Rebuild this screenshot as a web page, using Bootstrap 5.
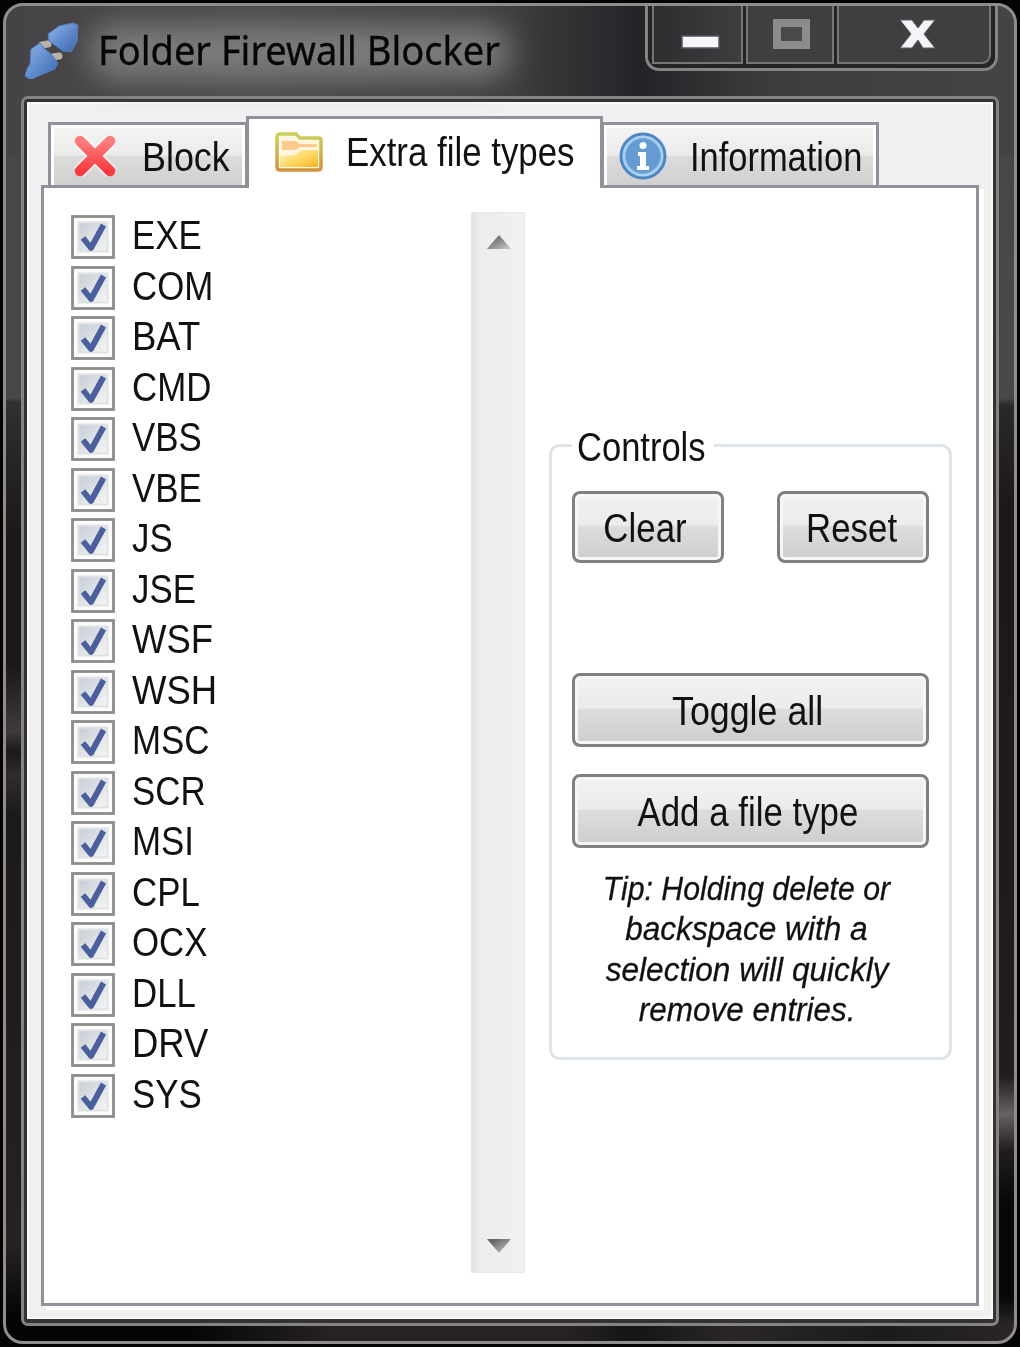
<!DOCTYPE html>
<html lang="en">
<head>
<meta charset="utf-8">
<title>Folder Firewall Blocker</title>
<link href="https://cdn.jsdelivr.net/npm/bootstrap@5.3.0/dist/css/bootstrap.min.css" rel="stylesheet">
<style>
body{margin:0;background:#050303;width:1020px;height:1347px;overflow:hidden;font-family:"Liberation Sans",Arial,sans-serif;font-size:41px;line-height:50px;color:#111}
.win{width:1014px;height:1341px;margin:3px;border:3px solid #8e8c8e;border-radius:20px;overflow:hidden;padding:0 15px 14px;background:
 linear-gradient(90deg,#454345 0,#4b494b 25%,#3f3d3f 50%,#222427 63%,#3f3c3e 76%,#464345 100%) 0 0/100% 150px no-repeat,
 linear-gradient(90deg,#040506 0,#040506 18%,#262122 32%,#262122 56%,#151516 62%,#2a2627 72%,#1b1b1d 87%,#2a2527 100%) 0 100%/100% 18px no-repeat,
 linear-gradient(180deg,#474547 0,#494749 392px,#312f31 396px,#1b171a 530px,#1b171a 660px,#403b3a 725px,#1c1919 745px,#302c2b 770px,#1c1919 810px,#262122 1240px,#040506 1310px) 0 0/50% 100% no-repeat,
 linear-gradient(180deg,#474547 0,#494749 392px,#2b282a 400px,#1b171a 500px,#211d1e 1070px,#66625f 1108px,#201c1d 1145px,#060708 1200px,#060708 1290px,#2a2728 1320px) 100% 0/50% 100% no-repeat}
.titlebar{height:90px}
.app-ico{width:58px;height:58px;margin:15px 0 0 1px}
.caption{position:relative;width:420px;margin:17px 0 0 18px;font-family:"Noto Sans","Open Sans",sans-serif;font-size:40px;color:#070507;height:56px;line-height:54px;z-index:0}
.caption::before{content:"";position:absolute;inset:2px 8px 0 -8px;background:#7d7b7d;filter:blur(15px);z-index:-1;border-radius:24px}
.sx{display:inline-block;white-space:nowrap;transform:scaleX(.85);transform-origin:0 50%}
.sx-c{transform-origin:50% 50%}
.cap-sx{transform:scaleX(.95);-webkit-text-stroke:.3px #070507}
.winbtns{width:353px;height:65px;margin-right:1px;margin-left:auto;border:3px solid #858385;border-top:0;border-radius:0 0 14px 14px;padding:0 4px 4px;background:#242425}
.wb{border:2px solid #777577;border-top:0;background:linear-gradient(90deg,#2c2d2e,#403d3f)}
.wb + .wb{background:#413e40;margin-left:3px}
.client{height:1230px;border:3px solid #858385;border-radius:7px;background:#343234;padding:3px 3px 4px}
.client-in{height:100%;background:#f0f0f0;border:2px solid #fafafa;padding:12px 12px 12px 12px}
.tabstrip{height:72px;padding-left:7px;position:relative;z-index:1}
.tab{border:3px solid #8f929a;height:66px;background:#fff;padding:3px 3px 0}
.tab-face{height:100%;background:linear-gradient(#f3f3f3 0,#ebebeb 48%,#dcdcdc 49%,#cfd0cf 100%)}
.tab-on{height:72px;border-bottom:0;background:#fff;margin:0 -2px;z-index:2;position:relative}
.page{height:1121px;margin-top:-3px;border:3px solid #8f929a;background:#fff;box-shadow:5px 4px 0 #fff;padding:24px 24px 30px 27px}
.items{width:400px;padding-top:3px}
.item{height:50.53px}
.item .sx{margin-top:-5px}
.cb{width:44px;height:44px;flex:none;margin-right:17px}
.sbar{width:55px;background:linear-gradient(90deg,#e3e3e3,#ededed 16%,#efefef 75%,#f2f2f2);border:1px solid #e8e8e8;padding:20px 0 17px 2px}
.side{width:403px;margin:0 0 0 24px;padding-top:232px}
.group{height:616px;border:3px solid #dce4ea;border-radius:11px;padding:0 20px;position:relative}
.group-t{position:absolute;left:20px;top:-25px;background:#fff;width:142px;height:50px;padding-left:5px;line-height:50px}
.wbtn{border:3px solid #808080;border-radius:8px;background:linear-gradient(#f2f2f2 0,#ebebeb 47%,#dddddd 49%,#cdcdcd 100%);box-shadow:inset 0 0 0 3px #f6f6f6;padding:0;color:#111;font-size:41px;line-height:66px;height:74px;width:100%;text-align:center;overflow:hidden}
.half{width:152px;height:72px}
.wbtn .sx{position:relative;left:-3px;top:1px}
.tip{font-style:italic;font-size:34px;line-height:40.3px;text-align:center;padding-top:20px;margin-left:-8px;-webkit-text-stroke:.3px #111}
.tip .sx{transform:scaleX(.89)}
.items .wide{transform:scaleX(.89)}
</style>
<script src="https://cdn.jsdelivr.net/npm/bootstrap@5.3.0/dist/js/bootstrap.bundle.min.js"></script>
</head>
<body>
<svg width="0" height="0" class="position-absolute">
 <defs>
  <linearGradient id="cbg" x1="0" y1="0" x2="1" y2="1"><stop offset="0" stop-color="#c6cdd5"/><stop offset="1" stop-color="#f6f6f6"/></linearGradient>
  <linearGradient id="blu" x1="0" y1="0" x2="1" y2="1"><stop offset="0" stop-color="#8fb6e8"/><stop offset="1" stop-color="#3565b4"/></linearGradient>
  <linearGradient id="red" x1="0" y1="0" x2="0" y2="1"><stop offset="0" stop-color="#ff7d7d"/><stop offset="1" stop-color="#f83b40"/></linearGradient>
  <linearGradient id="yel" x1="0" y1="0" x2="1" y2="1"><stop offset="0" stop-color="#fff3c8"/><stop offset=".5" stop-color="#ffd968"/><stop offset="1" stop-color="#fbb321"/></linearGradient>
  <linearGradient id="fst" x1="0" y1="0" x2="0" y2="1"><stop offset="0" stop-color="#ccd05c"/><stop offset="1" stop-color="#cf9440"/></linearGradient>
  <linearGradient id="arr" x1="0" y1="0" x2="1" y2="1"><stop offset=".2" stop-color="#666"/><stop offset="1" stop-color="#ccc"/></linearGradient>
  <symbol id="check" viewBox="0 0 44 44"><rect x="1.500" y="1.500" width="41" height="41" fill="#fcfcfc" stroke="#8b8d8b" stroke-width="2.800"/><rect x="7.500" y="7.500" width="29" height="29" fill="url(#cbg)" stroke="#dfe2e5" stroke-width="2"/><path d="M12 23l8 10 12.500-23" fill="none" stroke="#4a5f9c" stroke-width="5.800" stroke-linejoin="round"/></symbol>
 </defs>
</svg>
<main class="win">
 <header class="titlebar d-flex align-items-start">
  <svg class="app-ico flex-shrink-0" viewBox="0 0 58 58"><path d="M20 24l6-1M31 36l6-1" fill="none" stroke="#b9b3aa" stroke-width="7" stroke-linecap="round"/><path d="M26 13l11-8 14-3 5 2-1 17-6 10-8-1-14-10z" fill="url(#blu)" stroke="#557bb8" stroke-linejoin="round"/><path d="M9 28l9-6 6 7 5 4 7 9-3 6-12 5-7 3-5 3-6-4 2-7 3-5z" fill="url(#blu)" stroke="#557bb8" stroke-linejoin="round"/></svg>
  <div class="caption"><span class="sx cap-sx">Folder Firewall Blocker</span></div>
  <div class="winbtns d-flex">
   <div class="wb" style="width:91px"><svg class="d-block" width="87" height="56"><rect x="28" y="30" width="37" height="12" fill="#f6f6f8" stroke="#535868" stroke-width="1.500"/></svg></div>
   <div class="wb" style="width:88px"><svg class="d-block" width="84" height="56"><rect x="29" y="17" width="29" height="22" fill="#4a484a" stroke="#8d8b8d" stroke-width="8"/></svg></div>
   <div class="wb flex-fill" style="border-radius:0 0 9px 0"><svg class="d-block" width="148" height="56"><path d="M61 14h12l6 8 6-8h11L85 28l11 14H84l-5-8-6 8H61l11-14z" fill="#f4f4f6" stroke="#565b6b"/></svg></div>
  </div>
 </header>
 <section class="client"><div class="client-in">
  <nav class="tabstrip d-flex align-items-end">
   <div class="tab" style="width:200px"><div class="tab-face d-flex align-items-center"><svg class="flex-shrink-0" width="46" height="46" viewBox="0 0 46 46" style="margin:0 24px 2px 18px"><path d="M7 7l32 32M39 7L7 39" stroke="#fff" stroke-width="14" opacity=".6"/><path d="M8 8l30 30M38 8L8 38" stroke="url(#red)" stroke-width="10.500" stroke-linecap="round"/></svg><span class="sx" style="transform:scaleX(.875)">Block</span></div></div>
   <div class="tab tab-on d-flex" style="width:357px"><svg class="flex-shrink-0" width="48" height="40" viewBox="0 0 48 40" style="margin:10px 23px 0 23px"><path d="M2 5q0-3 3-3h16l4 4h19q2 0 2 2v27q0 3-3 3H5q-3 0-3-3z" fill="#fff6df" stroke="url(#fst)" stroke-width="3.500"/><path d="M7 9h14l4 3h17v3H25l-4 3H7z" fill="#ffc98d"/><path d="M5 35V24l15-1 6-5h17v17z" fill="url(#yel)"/></svg><span class="sx" style="padding-top:5px">Extra file types</span></div>
   <div class="tab" style="width:278px"><div class="tab-face d-flex align-items-center"><svg class="flex-shrink-0" width="48" height="48" viewBox="0 0 48 48" style="margin:0 23px 2px 12px"><circle cx="24" cy="24" r="22" fill="#a9d2f1" stroke="#4f87c4" stroke-width="3"/><circle cx="24" cy="24" r="17.500" fill="#649bd2" stroke="#7fabdd"/><path d="M20 20h7v14h3v4H18v-4h3V24h-2v-4z" fill="#fff"/><circle cx="24" cy="13.500" r="3.500" fill="#fff"/></svg><span class="sx" style="transform:scaleX(.84)">Information</span></div></div>
  </nav>
  <div class="page d-flex">
   <div class="items" id="items"></div>
   <div class="sbar d-flex flex-column justify-content-between align-items-center">
    <svg width="28" height="18"><path d="M2 16L14 2l12 14z" fill="url(#arr)"/></svg>
    <svg width="28" height="18"><path d="M2 2h24L14 16z" fill="url(#arr)"/></svg>
   </div>
   <div class="side"><div class="group">
    <div class="group-t"><span class="sx" style="transform:scaleX(.842)">Controls</span></div>
    <div class="d-flex justify-content-between" style="padding-top:44px"><button class="wbtn half"><span class="sx sx-c">Clear</span></button><button class="wbtn half"><span class="sx sx-c" style="left:-1px">Reset</span></button></div>
    <button class="wbtn d-block" style="margin-top:110px"><span class="sx sx-c" style="transform:scaleX(.873)">Toggle all</span></button>
    <button class="wbtn d-block" style="margin-top:27px"><span class="sx sx-c">Add a file type</span></button>
    <div class="tip"><span class="sx sx-c">Tip: Holding delete or</span><br><span class="sx sx-c" style="transform:scaleX(.93)">backspace with a</span><br><span class="sx sx-c" style="transform:scaleX(.93)">selection will quickly</span><br><span class="sx sx-c" style="transform:scaleX(.925)">remove entries.</span></div>
   </div></div>
  </div>
 </div></section>
</main>
<script>
document.getElementById('items').innerHTML = 'EXE COM BAT CMD VBS VBE JS JSE WSF WSH MSC SCR MSI CPL OCX DLL DRV SYS'.split(' ')
 .map(t => `<div class="item d-flex"><svg class="cb"><use href="#check"/></svg><span class="sx${/^(WS|BAT|DRV)/.test(t) ? ' wide' : ''}">${t}</span></div>`).join('');
</script>
</body>
</html>
